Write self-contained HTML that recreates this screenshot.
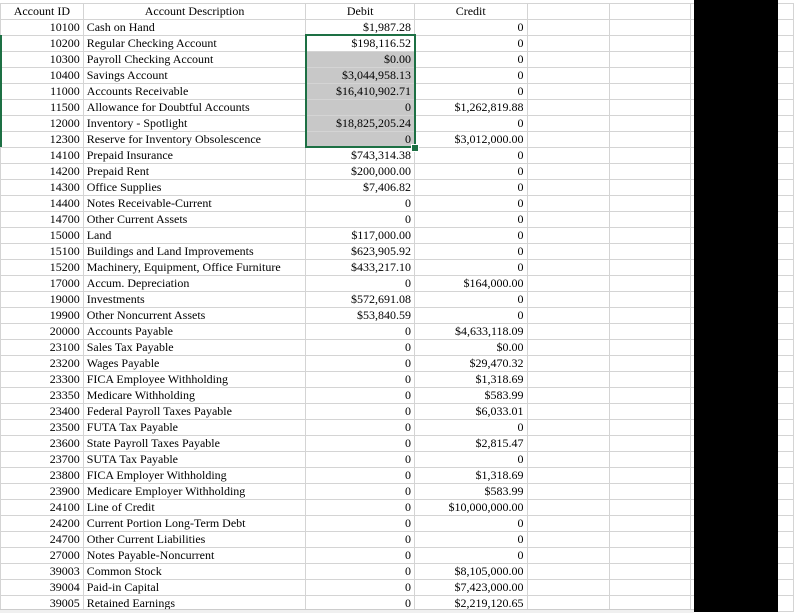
<!DOCTYPE html>
<html><head><style>
body{margin:0;width:794px;height:612px;overflow:hidden;background:#fff;position:relative;font-family:"Liberation Serif",serif;font-size:12px;color:#000}
table{position:absolute;left:0;top:3px;border-collapse:collapse;table-layout:fixed}
td{height:15px;border:1px solid #d4d4d4;padding:0 3px;white-space:nowrap;overflow:hidden;line-height:15px}
td.r{text-align:right}
td.c{text-align:center}
tr.g td.d{background:#c8c8c8}
#blk{position:absolute;left:694px;top:0;width:84px;height:612px;background:#000}
#sel{position:absolute;left:305px;top:34px;width:107px;height:110px;border:2px solid #1d7044}
#h{position:absolute;left:411px;top:144px;width:6px;height:6px;background:#1d7044;border:1px solid #fff}
#lg{position:absolute;left:0;top:35px;width:2px;height:112px;background:#1d7044}
#bar{position:absolute;left:0;top:609px;width:694px;height:3px;background:#f0f0f0;border-top:1px solid #ccc}
</style></head><body>
<table>
<colgroup><col style="width:83px"><col style="width:223px"><col style="width:109px"><col style="width:113px"><col style="width:84px"><col style="width:82px"><col style="width:84px"><col style="width:20px"></colgroup>
<tr><td class="c">Account ID</td><td class="c">Account Description</td><td class="c">Debit</td><td class="c">Credit</td><td></td><td></td><td></td><td></td></tr>
<tr><td class="r">10100</td><td>Cash on Hand</td><td class="r d">$1,987.28</td><td class="r">0</td><td></td><td></td><td></td><td></td></tr>
<tr><td class="r">10200</td><td>Regular Checking Account</td><td class="r">$198,116.52</td><td class="r">0</td><td></td><td></td><td></td><td></td></tr>
<tr class="g"><td class="r">10300</td><td>Payroll Checking Account</td><td class="r d">$0.00</td><td class="r">0</td><td></td><td></td><td></td><td></td></tr>
<tr class="g"><td class="r">10400</td><td>Savings Account</td><td class="r d">$3,044,958.13</td><td class="r">0</td><td></td><td></td><td></td><td></td></tr>
<tr class="g"><td class="r">11000</td><td>Accounts Receivable</td><td class="r d">$16,410,902.71</td><td class="r">0</td><td></td><td></td><td></td><td></td></tr>
<tr class="g"><td class="r">11500</td><td>Allowance for Doubtful Accounts</td><td class="r d">0</td><td class="r">$1,262,819.88</td><td></td><td></td><td></td><td></td></tr>
<tr class="g"><td class="r">12000</td><td>Inventory - Spotlight</td><td class="r d">$18,825,205.24</td><td class="r">0</td><td></td><td></td><td></td><td></td></tr>
<tr class="g"><td class="r">12300</td><td>Reserve for Inventory Obsolescence</td><td class="r d">0</td><td class="r">$3,012,000.00</td><td></td><td></td><td></td><td></td></tr>
<tr><td class="r">14100</td><td>Prepaid Insurance</td><td class="r">$743,314.38</td><td class="r">0</td><td></td><td></td><td></td><td></td></tr>
<tr><td class="r">14200</td><td>Prepaid Rent</td><td class="r">$200,000.00</td><td class="r">0</td><td></td><td></td><td></td><td></td></tr>
<tr><td class="r">14300</td><td>Office Supplies</td><td class="r">$7,406.82</td><td class="r">0</td><td></td><td></td><td></td><td></td></tr>
<tr><td class="r">14400</td><td>Notes Receivable-Current</td><td class="r">0</td><td class="r">0</td><td></td><td></td><td></td><td></td></tr>
<tr><td class="r">14700</td><td>Other Current Assets</td><td class="r">0</td><td class="r">0</td><td></td><td></td><td></td><td></td></tr>
<tr><td class="r">15000</td><td>Land</td><td class="r">$117,000.00</td><td class="r">0</td><td></td><td></td><td></td><td></td></tr>
<tr><td class="r">15100</td><td>Buildings and Land Improvements</td><td class="r">$623,905.92</td><td class="r">0</td><td></td><td></td><td></td><td></td></tr>
<tr><td class="r">15200</td><td>Machinery, Equipment, Office Furniture</td><td class="r">$433,217.10</td><td class="r">0</td><td></td><td></td><td></td><td></td></tr>
<tr><td class="r">17000</td><td>Accum. Depreciation</td><td class="r">0</td><td class="r">$164,000.00</td><td></td><td></td><td></td><td></td></tr>
<tr><td class="r">19000</td><td>Investments</td><td class="r">$572,691.08</td><td class="r">0</td><td></td><td></td><td></td><td></td></tr>
<tr><td class="r">19900</td><td>Other Noncurrent Assets</td><td class="r">$53,840.59</td><td class="r">0</td><td></td><td></td><td></td><td></td></tr>
<tr><td class="r">20000</td><td>Accounts Payable</td><td class="r">0</td><td class="r">$4,633,118.09</td><td></td><td></td><td></td><td></td></tr>
<tr><td class="r">23100</td><td>Sales Tax Payable</td><td class="r">0</td><td class="r">$0.00</td><td></td><td></td><td></td><td></td></tr>
<tr><td class="r">23200</td><td>Wages Payable</td><td class="r">0</td><td class="r">$29,470.32</td><td></td><td></td><td></td><td></td></tr>
<tr><td class="r">23300</td><td>FICA Employee Withholding</td><td class="r">0</td><td class="r">$1,318.69</td><td></td><td></td><td></td><td></td></tr>
<tr><td class="r">23350</td><td>Medicare Withholding</td><td class="r">0</td><td class="r">$583.99</td><td></td><td></td><td></td><td></td></tr>
<tr><td class="r">23400</td><td>Federal Payroll Taxes Payable</td><td class="r">0</td><td class="r">$6,033.01</td><td></td><td></td><td></td><td></td></tr>
<tr><td class="r">23500</td><td>FUTA Tax Payable</td><td class="r">0</td><td class="r">0</td><td></td><td></td><td></td><td></td></tr>
<tr><td class="r">23600</td><td>State Payroll Taxes Payable</td><td class="r">0</td><td class="r">$2,815.47</td><td></td><td></td><td></td><td></td></tr>
<tr><td class="r">23700</td><td>SUTA Tax Payable</td><td class="r">0</td><td class="r">0</td><td></td><td></td><td></td><td></td></tr>
<tr><td class="r">23800</td><td>FICA Employer Withholding</td><td class="r">0</td><td class="r">$1,318.69</td><td></td><td></td><td></td><td></td></tr>
<tr><td class="r">23900</td><td>Medicare Employer Withholding</td><td class="r">0</td><td class="r">$583.99</td><td></td><td></td><td></td><td></td></tr>
<tr><td class="r">24100</td><td>Line of Credit</td><td class="r">0</td><td class="r">$10,000,000.00</td><td></td><td></td><td></td><td></td></tr>
<tr><td class="r">24200</td><td>Current Portion Long-Term Debt</td><td class="r">0</td><td class="r">0</td><td></td><td></td><td></td><td></td></tr>
<tr><td class="r">24700</td><td>Other Current Liabilities</td><td class="r">0</td><td class="r">0</td><td></td><td></td><td></td><td></td></tr>
<tr><td class="r">27000</td><td>Notes Payable-Noncurrent</td><td class="r">0</td><td class="r">0</td><td></td><td></td><td></td><td></td></tr>
<tr><td class="r">39003</td><td>Common Stock</td><td class="r">0</td><td class="r">$8,105,000.00</td><td></td><td></td><td></td><td></td></tr>
<tr><td class="r">39004</td><td>Paid-in Capital</td><td class="r">0</td><td class="r">$7,423,000.00</td><td></td><td></td><td></td><td></td></tr>
<tr><td class="r">39005</td><td>Retained Earnings</td><td class="r">0</td><td class="r">$2,219,120.65</td><td></td><td></td><td></td><td></td></tr>
</table>
<div id="bar"></div>
<div id="lg"></div>
<div id="sel"></div>
<div id="h"></div>
<div id="blk"></div>
</body></html>
